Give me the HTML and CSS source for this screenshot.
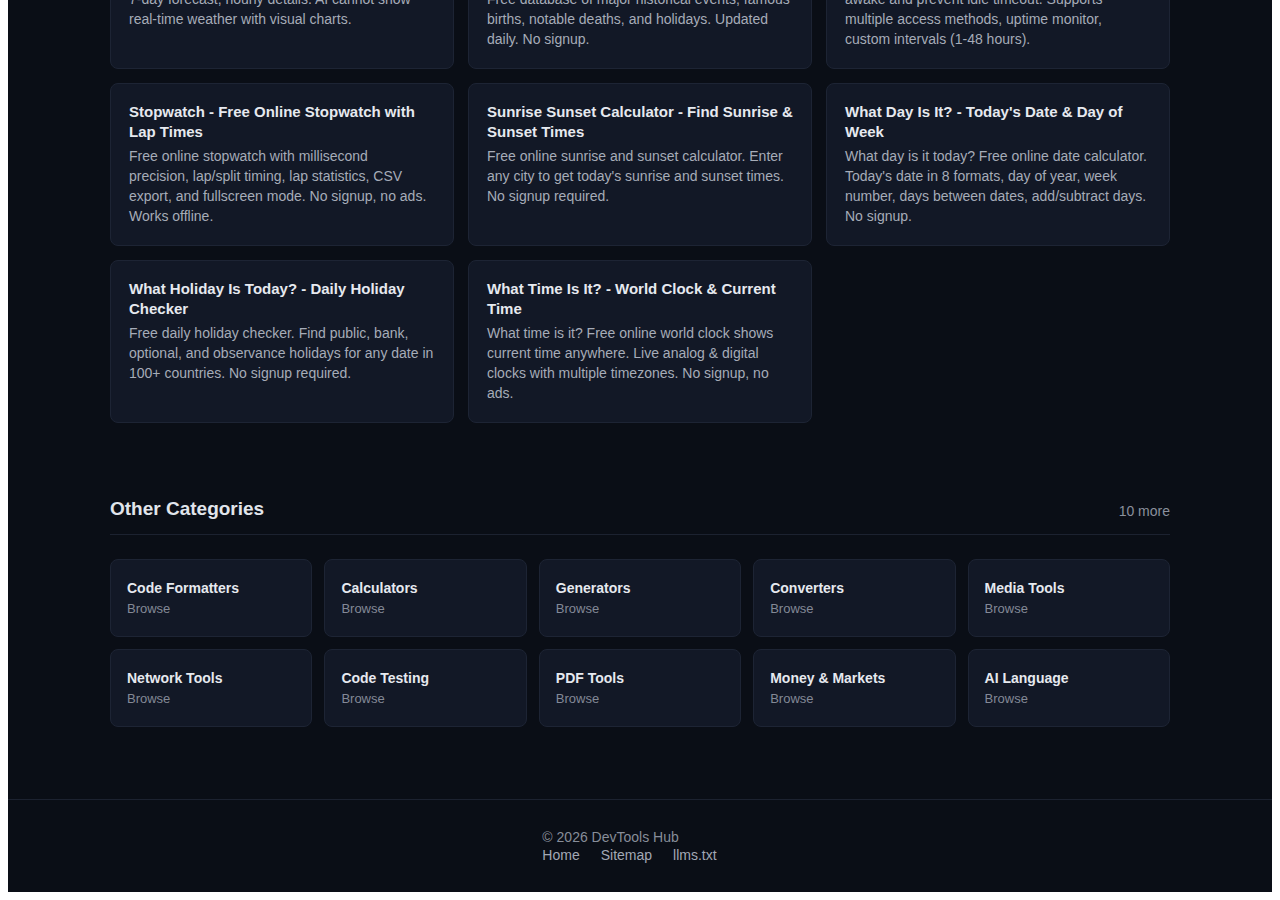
FILE: index.html
```html
<!DOCTYPE html>
<html lang="en">
<head>
<meta charset="utf-8">
<title>Time &amp; Date Tools - DevTools Hub</title>
<link rel="stylesheet" href="styles.css">
</head>
<body>
<div class="page">
  <main class="container">
    <section class="tools">
      <div class="tool-grid">
        <a class="tool-card" href="#">
          <h3 class="tool-title">Weather Forecast - Free Live Weather &amp; Outlook</h3>
          <p class="tool-desc">Free live weather for any city. Current conditions,<br>7-day forecast, hourly details. AI cannot show<br>real-time weather with visual charts.</p>
        </a>
        <a class="tool-card" href="#">
          <h3 class="tool-title">On This Day in History - Events &amp; Births</h3>
          <p class="tool-desc">What happened today in history? Search any date.<br>Free database of major historical events, famous<br>births, notable deaths, and holidays. Updated<br>daily. No signup.</p>
        </a>
        <a class="tool-card" href="#">
          <h3 class="tool-title">Keep Alive - Website Pinger &amp; Uptime Check</h3>
          <p class="tool-desc">Free website pinger to keep your servers<br>awake and prevent idle timeout. Supports<br>multiple access methods, uptime monitor,<br>custom intervals (1-48 hours).</p>
        </a>
        <a class="tool-card" href="#">
          <h3 class="tool-title">Stopwatch - Free Online Stopwatch with Lap Times</h3>
          <p class="tool-desc">Free online stopwatch with millisecond<br>precision, lap/split timing, lap statistics, CSV<br>export, and fullscreen mode. No signup, no ads.<br>Works offline.</p>
        </a>
        <a class="tool-card" href="#">
          <h3 class="tool-title">Sunrise Sunset Calculator - Find Sunrise &amp; Sunset Times</h3>
          <p class="tool-desc">Free online sunrise and sunset calculator. Enter<br>any city to get today's sunrise and sunset times.<br>No signup required.</p>
        </a>
        <a class="tool-card" href="#">
          <h3 class="tool-title">What Day Is It? - Today's Date &amp; Day of Week</h3>
          <p class="tool-desc">What day is it today? Free online date calculator.<br>Today's date in 8 formats, day of year, week<br>number, days between dates, add/subtract days.<br>No signup.</p>
        </a>
        <a class="tool-card" href="#">
          <h3 class="tool-title">What Holiday Is Today? - Daily Holiday Checker</h3>
          <p class="tool-desc">Free daily holiday checker. Find public, bank,<br>optional, and observance holidays for any date in<br>100+ countries. No signup required.</p>
        </a>
        <a class="tool-card" href="#">
          <h3 class="tool-title">What Time Is It? - World Clock &amp; Current Time</h3>
          <p class="tool-desc">What time is it? Free online world clock shows<br>current time anywhere. Live analog &amp; digital<br>clocks with multiple timezones. No signup, no<br>ads.</p>
        </a>
      </div>
    </section>

    <section class="other">
      <div class="section-head">
        <h2 class="section-title">Other Categories</h2>
        <span class="section-count">10 more</span>
      </div>
      <div class="cat-grid">
        <a class="cat-card" href="#"><span class="cat-name">Code Formatters</span><span class="cat-sub">Browse</span></a>
        <a class="cat-card" href="#"><span class="cat-name">Calculators</span><span class="cat-sub">Browse</span></a>
        <a class="cat-card" href="#"><span class="cat-name">Generators</span><span class="cat-sub">Browse</span></a>
        <a class="cat-card" href="#"><span class="cat-name">Converters</span><span class="cat-sub">Browse</span></a>
        <a class="cat-card" href="#"><span class="cat-name">Media Tools</span><span class="cat-sub">Browse</span></a>
        <a class="cat-card" href="#"><span class="cat-name">Network Tools</span><span class="cat-sub">Browse</span></a>
        <a class="cat-card" href="#"><span class="cat-name">Code Testing</span><span class="cat-sub">Browse</span></a>
        <a class="cat-card" href="#"><span class="cat-name">PDF Tools</span><span class="cat-sub">Browse</span></a>
        <a class="cat-card" href="#"><span class="cat-name">Money &amp; Markets</span><span class="cat-sub">Browse</span></a>
        <a class="cat-card" href="#"><span class="cat-name">AI Language</span><span class="cat-sub">Browse</span></a>
      </div>
    </section>
  </main>

  <footer class="site-footer">
    <div class="footer-inner">
      <p class="copyright">© 2026 DevTools Hub</p>
      <nav class="footer-links">
        <a href="#">Home</a>
        <a href="#">Sitemap</a>
        <a href="#">llms.txt</a>
      </nav>
    </div>
  </footer>
</div>
</body>
</html>
```
FILE: styles.css
```css
html {
  background: #ffffff;
}

body {
  margin: 0 8px 8px 8px;
  font-family: "Liberation Sans", Arial, sans-serif;
  color: #e5e8ee;
}

.page {
  height: 892px;
  overflow: hidden;
  background: #0a0e16;
  display: flex;
  flex-direction: column;
  justify-content: flex-end;
}

.page > * {
  flex-shrink: 0;
}

a {
  text-decoration: none;
  color: inherit;
}

.container {
  width: 1060px;
  margin: 0 auto;
  padding-bottom: 72px;
}

/* tool cards */
.tool-grid {
  display: grid;
  grid-template-columns: repeat(3, 1fr);
  gap: 14px;
}

.tool-card {
  display: flex;
  flex-direction: column;
  background: #121826;
  border: 1px solid #1d2434;
  border-radius: 8px;
  padding: 18px 18px 19px;
}

.tool-title {
  margin: 0;
  font-size: 15px;
  line-height: 20px;
  font-weight: 700;
  color: #e6e9ef;
}

.tool-desc {
  margin: 4px 0 0;
  font-size: 14px;
  line-height: 20px;
  color: #a6acb8;
}

/* other categories */
.other {
  margin-top: 72px;
}

.section-head {
  display: flex;
  justify-content: space-between;
  align-items: center;
  padding-bottom: 11px;
  border-bottom: 1px solid #1c2230;
}

.section-title {
  margin: 0;
  font-size: 19px;
  line-height: 28px;
  font-weight: 700;
  color: #e1e5eb;
}

.section-count {
  font-size: 14px;
  line-height: 20px;
  color: #8a909c;
  padding-top: 4px;
}

.cat-grid {
  margin-top: 24px;
  display: grid;
  grid-template-columns: repeat(5, 1fr);
  gap: 12px;
}

.cat-card {
  display: flex;
  flex-direction: column;
  background: #121826;
  border: 1px solid #1d2434;
  border-radius: 8px;
  padding: 18px 16px;
}

.cat-name {
  font-size: 14px;
  line-height: 20px;
  font-weight: 700;
  color: #e6e9ef;
}

.cat-sub {
  margin-top: 2px;
  font-size: 13px;
  line-height: 18px;
  color: #838996;
}

/* footer */
.site-footer {
  border-top: 1px solid #1c2230;
  padding: 28px 0;
  display: flex;
  justify-content: center;
}

.footer-inner {
  display: flex;
  flex-direction: column;
}

.copyright {
  margin: 0;
  font-size: 14px;
  line-height: 18px;
  color: #878d99;
}

.footer-links {
  display: flex;
}

.footer-links a {
  font-size: 14px;
  line-height: 18px;
  color: #a2a8b4;
  margin-right: 21px;
}
```
